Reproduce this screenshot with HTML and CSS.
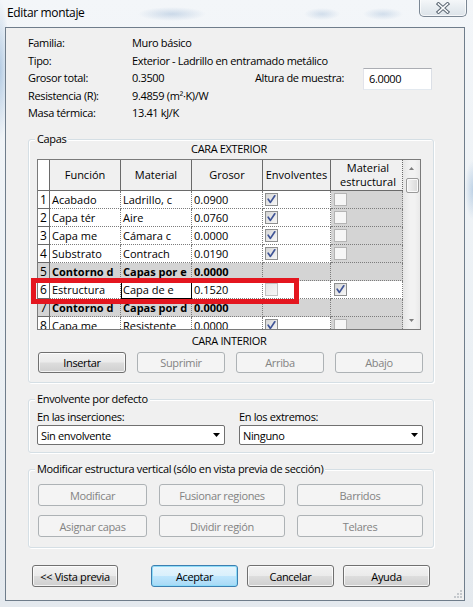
FILE: index.html
```html
<!DOCTYPE html>
<html lang="es">
<head>
<meta charset="utf-8">
<title>Editar montaje</title>
<link rel="stylesheet" href="styles.css">
</head>
<body>
<div class="frame">
  <div class="titlebar">
    <span class="title">Editar montaje</span>
    <div class="close" aria-label="Cerrar">
      <svg width="14" height="12" viewBox="0 0 14 12"><path class="xo" d="M2.5 2 L11.5 10 M11.5 2 L2.5 10"/><path class="xi" d="M2.5 2 L11.5 10 M11.5 2 L2.5 10"/></svg>
    </div>
  </div>
  <div class="client">
    <div class="info">
      <div class="irow"><span class="lbl">Familia:</span><span>Muro básico</span></div>
      <div class="irow"><span class="lbl">Tipo:</span><span>Exterior - Ladrillo en entramado metálico</span></div>
      <div class="irow"><span class="lbl">Grosor total:</span><span class="val">0.3500</span><span class="lbl2">Altura de muestra:</span><span class="input">6.0000</span></div>
      <div class="irow"><span class="lbl">Resistencia (R):</span><span>9.4859 (m²·K)/W</span></div>
      <div class="irow"><span class="lbl">Masa térmica:</span><span>13.41 kJ/K</span></div>
    </div>

    <div class="group capas">
      <div class="gtitle">Capas</div>
      <div class="caption first">CARA EXTERIOR</div>
      <div class="gridwrap">
        <div class="grid">
          <div class="h n"></div><div class="h">Función</div><div class="h">Material</div><div class="h">Grosor</div><div class="h">Envolventes</div><div class="h last">Material<br>estructural</div>

          <div class="n">1</div><div class="c">Acabado</div><div class="c">Ladrillo, c</div><div class="c">0.0900</div><div class="c k"><span class="cb on"><svg viewBox="0 0 11 11"><path d="M2.2 5.2 L4.4 8.4 L8.8 1.8"/></svg></span></div><div class="c k g"><span class="cb off"></span></div>

          <div class="n">2</div><div class="c">Capa tér</div><div class="c">Aire</div><div class="c">0.0760</div><div class="c k"><span class="cb on"><svg viewBox="0 0 11 11"><path d="M2.2 5.2 L4.4 8.4 L8.8 1.8"/></svg></span></div><div class="c k g"><span class="cb off"></span></div>

          <div class="n">3</div><div class="c">Capa me</div><div class="c">Cámara c</div><div class="c">0.0000</div><div class="c k"><span class="cb on"><svg viewBox="0 0 11 11"><path d="M2.2 5.2 L4.4 8.4 L8.8 1.8"/></svg></span></div><div class="c k g"><span class="cb off"></span></div>

          <div class="n">4</div><div class="c">Substrato</div><div class="c">Contrach</div><div class="c">0.0190</div><div class="c k"><span class="cb on"><svg viewBox="0 0 11 11"><path d="M2.2 5.2 L4.4 8.4 L8.8 1.8"/></svg></span></div><div class="c k g"><span class="cb off"></span></div>

          <div class="n g">5</div><div class="c g b">Contorno d</div><div class="c g b">Capas por e</div><div class="c g b">0.0000</div><div class="c g"></div><div class="c g"></div>

          <div class="n">6</div><div class="c">Estructura</div><div class="c focus">Capa de e</div><div class="c">0.1520</div><div class="c k"><span class="cb dis"></span></div><div class="c k"><span class="cb on"><svg viewBox="0 0 11 11"><path d="M2.2 5.2 L4.4 8.4 L8.8 1.8"/></svg></span></div>

          <div class="n g">7</div><div class="c g b">Contorno d</div><div class="c g b">Capas por d</div><div class="c g b">0.0000</div><div class="c g"></div><div class="c g"></div>

          <div class="n">8</div><div class="c">Capa me</div><div class="c">Resistente</div><div class="c">0.0000</div><div class="c k"><span class="cb on"><svg viewBox="0 0 11 11"><path d="M2.2 5.2 L4.4 8.4 L8.8 1.8"/></svg></span></div><div class="c k g"><span class="cb off"></span></div>
        </div>
        <div class="vscroll">
          <div class="sbtn"><svg width="5" height="3" viewBox="0 0 5 3"><path d="M0 3 L2.5 0 L5 3Z"/></svg></div>
          <div class="thumb"></div>
          <div class="strack"></div>
          <div class="sbtn"><svg width="5" height="3" viewBox="0 0 5 3"><path d="M0 0 L5 0 L2.5 3Z"/></svg></div>
        </div>
      </div>
      <div class="caption">CARA INTERIOR</div>
      <div class="btnrow4">
        <div class="btn">Insertar</div>
        <div class="btn disabled">Suprimir</div>
        <div class="btn disabled">Arriba</div>
        <div class="btn disabled">Abajo</div>
      </div>
      <div class="highlight"></div>
    </div>

    <div class="group envol">
      <div class="gtitle">Envolvente por defecto</div>
      <div class="envcols">
        <div class="envcol">
          <div class="elbl">En las inserciones:</div>
          <div class="select"><span>Sin envolvente</span><svg width="7" height="4" viewBox="0 0 7 4"><path d="M0 0 L7 0 L3.5 4Z"/></svg></div>
        </div>
        <div class="envcol">
          <div class="elbl">En los extremos:</div>
          <div class="select"><span>Ninguno</span><svg width="7" height="4" viewBox="0 0 7 4"><path d="M0 0 L7 0 L3.5 4Z"/></svg></div>
        </div>
      </div>
    </div>

    <div class="group modif">
      <div class="gtitle">Modificar estructura vertical (sólo en vista previa de sección)</div>
      <div class="btngrid3">
        <div class="btn disabled">Modificar</div>
        <div class="btn disabled">Fusionar regiones</div>
        <div class="btn disabled">Barridos</div>
        <div class="btn disabled">Asignar capas</div>
        <div class="btn disabled">Dividir región</div>
        <div class="btn disabled">Telares</div>
      </div>
    </div>

    <div class="footer">
      <div class="btn preview">&lt;&lt; Vista previa</div>
      <div class="btn default">Aceptar</div>
      <div class="btn">Cancelar</div>
      <div class="btn">Ayuda</div>
    </div>

    <svg class="grip" width="8" height="8" viewBox="0 0 8 8">
      <rect x="6" y="0" width="2" height="2"/>
      <rect x="3" y="3" width="2" height="2"/><rect x="6" y="3" width="2" height="2"/>
      <rect x="0" y="6" width="2" height="2"/><rect x="3" y="6" width="2" height="2"/><rect x="6" y="6" width="2" height="2"/>
    </svg>
  </div>
</div>
</body>
</html>
```

FILE: styles.css
```css
* { box-sizing: border-box; }
html, body { margin: 0; padding: 0; }
body {
  width: 473px;
  height: 607px;
  overflow: hidden;
  font-family: "Open Sans", "Noto Sans", sans-serif;
  font-size: 11px;
  letter-spacing: -0.35px;
  color: #000;
  background: #eef2f6;
}

.frame {
  width: 473px;
  height: 607px;
  padding: 0 8px 6px 5px;
  background:
    radial-gradient(ellipse 34px 7px at 172px 14px, rgba(110, 150, 195, 0.30), transparent),
    radial-gradient(ellipse 18px 6px at 322px 14px, rgba(110, 150, 195, 0.25), transparent),
    radial-gradient(ellipse 20px 6px at 383px 14px, rgba(110, 150, 195, 0.25), transparent),
    radial-gradient(ellipse 10px 70px at 0px 70px, rgba(130, 170, 210, 0.55), transparent),
    radial-gradient(ellipse 8px 30px at 473px 190px, rgba(130, 170, 210, 0.45), transparent),
    linear-gradient(180deg, #f3f6f9 0%, #ebf0f4 60%, #e4e9ee 100%);
}

.titlebar {
  height: 27px;
  display: flex;
  align-items: flex-start;
}
.title {
  font-size: 12px;
  line-height: 26px;
  padding-left: 2px;
}
.close {
  margin-left: auto;
  margin-right: -2px;
  margin-top: -1px;
  width: 48px;
  height: 18px;
  border: 1px solid #7b8794;
  border-top: none;
  border-radius: 0 0 5px 5px;
  background: linear-gradient(180deg, #f6f8fa 0%, #e8edf1 50%, #dce3e9 100%);
  box-shadow: inset 0 0 0 1px rgba(255, 255, 255, 0.7);
  display: flex;
  align-items: center;
  justify-content: center;
}
.close svg { display: block; }
.close .xo { stroke: #5b6773; stroke-width: 3.6; stroke-linecap: square; fill: none; }
.close .xi { stroke: #fbfcfd; stroke-width: 1.6; stroke-linecap: square; fill: none; }

.client {
  position: relative;
  height: 574px;
  border: 1px solid #6f7d8b;
  background: #f0f0f0;
  padding: 6px 0 0 22px;
}

/* info block */
.irow {
  display: flex;
  align-items: center;
  height: 17.5px;
  white-space: nowrap;
}
.lbl { width: 104px; }
.val { width: 123px; }
.lbl2 { width: 108px; }
.input {
  width: 69px;
  height: 22px;
  margin-top: 2px;
  padding-left: 5px;
  line-height: 20px;
  background: #fff;
  border: 1px solid;
  border-color: #abadb3 #dbdfe6 #e3e9ef #e2e3ea;
}

/* group boxes */
.group {
  width: 406px;
  border: 1px solid #d5dfe5;
  border-radius: 3px;
  box-shadow: inset 1px 1px 0 #ffffff, 1px 1px 0 #ffffff;
}
.gtitle {
  width: fit-content;
  margin: -8px 0 0 -2px;
  padding: 0 2px;
  line-height: 14px;
  background: #f0f0f0;
  white-space: nowrap;
}
.modif .gtitle { margin-left: -3px; }

.capas {
  position: relative;
  margin-top: 17.5px;
  padding: 0 11px 9px 8px;
}
.caption {
  width: 384px;
  text-align: center;
  line-height: 14px;
  margin-top: 4px;
}
.caption.first { margin-top: -4px; }

.gridwrap {
  display: flex;
  width: 384px;
  height: 171px;
  margin-top: 3px;
  border: 1px solid #7a7a7a;
  overflow: hidden;
  background: #f0f0f0;
}
.grid {
  width: 365px;
  display: grid;
  grid-template-columns: 12px 71px 71px 71px 68px 72px;
  grid-template-rows: 31px;
  grid-auto-rows: 18px;
  align-content: start;
  flex: none;
  letter-spacing: 0;
}
.grid > div {
  white-space: nowrap;
  overflow: hidden;
  line-height: 17px;
}
.h {
  background: #f0f0f0;
  border-right: 1px solid #6a6a6a;
  border-bottom: 1px solid #6a6a6a;
  display: flex;
  align-items: center;
  justify-content: center;
  text-align: center;
}
.grid > .h { line-height: 14px; }
.h.last { border-right: 1px dotted #6a6a6a; }
.n {
  background: #fff;
  border-right: 1px solid #6a6a6a;
  border-bottom: 1px solid #6a6a6a;
  padding-left: 2px;
  font-size: 12px;
}
.c {
  background: #fff;
  border-right: 1px dotted #7c7c7c;
  border-bottom: 1px dotted #7c7c7c;
  padding-left: 2px;
}
.g { background: #d4d4d4; }
.b { font-weight: 700; }
.focus {
  outline: 1px solid #000;
  outline-offset: -1px;
}
.k {
  display: flex;
  align-items: center;
}
.grid > div:nth-child(6n) { padding-left: 3px; }

.cb {
  display: block;
  width: 13px;
  height: 13px;
  border: 1px solid #8e8f8f;
  background: linear-gradient(135deg, #d6d6d6 0%, #eeeeee 70%, #f8f8f8 100%);
}
.cb svg { display: block; width: 11px; height: 11px; }
.cb path { fill: none; stroke: #3f5496; stroke-width: 1.7; stroke-linecap: round; stroke-linejoin: round; }
.cb.off {
  border-color: #b4b4b4;
  background: #f6f6f6;
}
.cb.dis {
  border-color: #c2c2c2;
  background: linear-gradient(135deg, #e6e6e6, #f6f6f6);
}

.vscroll {
  width: 17px;
  flex: none;
  display: flex;
  flex-direction: column;
  background: linear-gradient(90deg, #e6e6e6 0%, #f2f2f2 40%, #f2f2f2 70%, #e9e9e9 100%);
}
.sbtn {
  height: 17px;
  display: flex;
  align-items: center;
  justify-content: center;
}
.sbtn svg { display: block; }
.sbtn path { fill: #7d7d7d; }
.thumb {
  height: 15px;
  margin: 1px 1px 0 3px;
  border: 1px solid #9a9a9a;
  border-radius: 2px;
  background: linear-gradient(90deg, #f4f4f4 0%, #e6e6e6 50%, #d9d9d9 100%);
  box-shadow: inset 0 0 0 1px #fafafa;
}
.strack { flex: 1; }

.highlight {
  position: absolute;
  left: 2px;
  top: 138px;
  width: 268px;
  height: 26px;
  border: 5px solid #e4161f;
}

/* buttons */
.btn {
  height: 21px;
  display: flex;
  align-items: center;
  justify-content: center;
  white-space: nowrap;
  border: 1px solid #707070;
  border-radius: 3px;
  background: linear-gradient(180deg, #f2f2f2 0%, #ebebeb 48%, #dddddd 52%, #cfcfcf 100%);
  box-shadow: inset 0 0 0 1px rgba(255, 255, 255, 0.75);
}
.btn.disabled {
  color: #838383;
  border-color: #adb2b5;
  background: #f4f4f4;
  box-shadow: none;
}
.btn.default {
  border-color: #3c7fb1;
  background: linear-gradient(180deg, #e6f5fd 0%, #d9f0fc 48%, #bee6fd 52%, #a7d9f5 100%);
  box-shadow: inset 0 0 0 1px #8fdcf8;
}

.btnrow4 {
  display: grid;
  grid-template-columns: repeat(4, 88px);
  column-gap: 11px;
  margin: 4px 0 0 1px;
}

.envol {
  margin-top: 16px;
  padding: 0 9px 7px 8px;
}
.envcols {
  display: flex;
  gap: 14px;
  margin-top: 4px;
}
.envcol:first-child { width: 188px; }
.envcol:last-child { width: 184px; }
.elbl { line-height: 14px; }
.select {
  margin-top: 1px;
  height: 20px;
  display: flex;
  align-items: center;
  justify-content: space-between;
  padding: 0 4px 0 3px;
  background: #fff;
  border: 1px solid #707070;
  border-radius: 2px;
}
.select svg { display: block; }
.select path { fill: #000; }

.modif {
  margin-top: 16px;
  padding: 0 9px 10px 9px;
}
.btngrid3 {
  display: grid;
  grid-template-columns: 109px 126px 126px;
  grid-auto-rows: 22px;
  column-gap: 12px;
  row-gap: 9px;
  margin-top: 8px;
}
.btngrid3 .btn { height: 22px; }

.footer {
  display: flex;
  gap: 9px;
  margin-top: 17px;
  padding-left: 4px;
}
.footer .btn { width: 87px; height: 22px; }
.footer .preview { width: 86px; margin-right: 24px; }

.grip {
  position: absolute;
  right: 2px;
  bottom: 2px;
}
.grip rect { fill: #c4c8cc; }
```
